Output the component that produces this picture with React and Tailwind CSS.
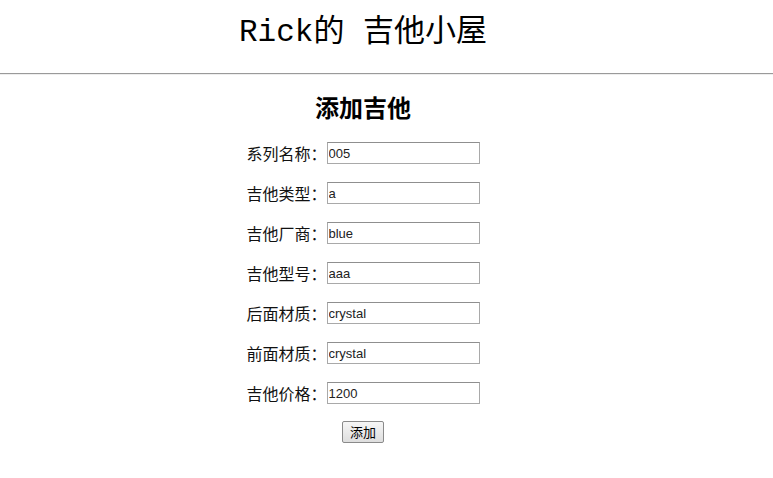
import React, { useState } from "react";

const fields = [
  { label: "系列名称：", name: "serialNumber", value: "005" },
  { label: "吉他类型：", name: "type", value: "a" },
  { label: "吉他厂商：", name: "builder", value: "blue" },
  { label: "吉他型号：", name: "model", value: "aaa" },
  { label: "后面材质：", name: "backWood", value: "crystal" },
  { label: "前面材质：", name: "topWood", value: "crystal" },
  { label: "吉他价格：", name: "price", value: "1200" },
];

const App = () => {
  const [form, setForm] = useState(
    Object.fromEntries(fields.map((f) => [f.name, f.value]))
  );

  const handleChange = (e) => {
    setForm({ ...form, [e.target.name]: e.target.value });
  };

  return (
    <div className="w-[773px] min-h-[478px] bg-white text-black font-['Liberation_Serif','Noto_Sans_CJK_SC',serif]">
      {/* header */}
      <div className="w-[726px] h-[73px] pt-[13px] text-center">
        <h1 className="text-[31px] leading-[40px] font-normal font-['Liberation_Mono','Noto_Sans_CJK_SC',monospace]">
          Rick的 吉他小屋
        </h1>
      </div>
      <div className="border-t border-[#9a9a9a] border-b border-b-[#eeeeee]" />

      {/* form */}
      <div className="w-[726px] text-center">
        <h2 className="mt-[19px] text-[24px] leading-[30px] font-semibold">添加吉他</h2>
        <div className="mt-[18px] flex flex-col items-center gap-[18px]">
          {fields.map((f) => (
            <div key={f.name} className="flex items-center h-[22px]">
              <label className="w-[80px] text-[16px] leading-[22px] text-left font-['Noto_Sans_CJK_SC',sans-serif] text-[#111]">
                {f.label}
              </label>
              <input
                type="text"
                name={f.name}
                value={form[f.name]}
                onChange={handleChange}
                className="w-[153px] h-[22px] border border-[#a9a9a9] border-t-[#8f8f8f] px-[1px] text-[13px] font-['Liberation_Sans',Arial,sans-serif] text-[#222] outline-none"
              />
            </div>
          ))}
        </div>
        <button className="mt-[17px] w-[42px] h-[22px] border border-[#8a8a8a] rounded-[2px] bg-gradient-to-b from-[#f6f6f6] to-[#dedede] text-[13px] leading-[20px] font-['Noto_Sans_CJK_SC',sans-serif]">
          添加
        </button>
      </div>
    </div>
  );
};

export default App;
